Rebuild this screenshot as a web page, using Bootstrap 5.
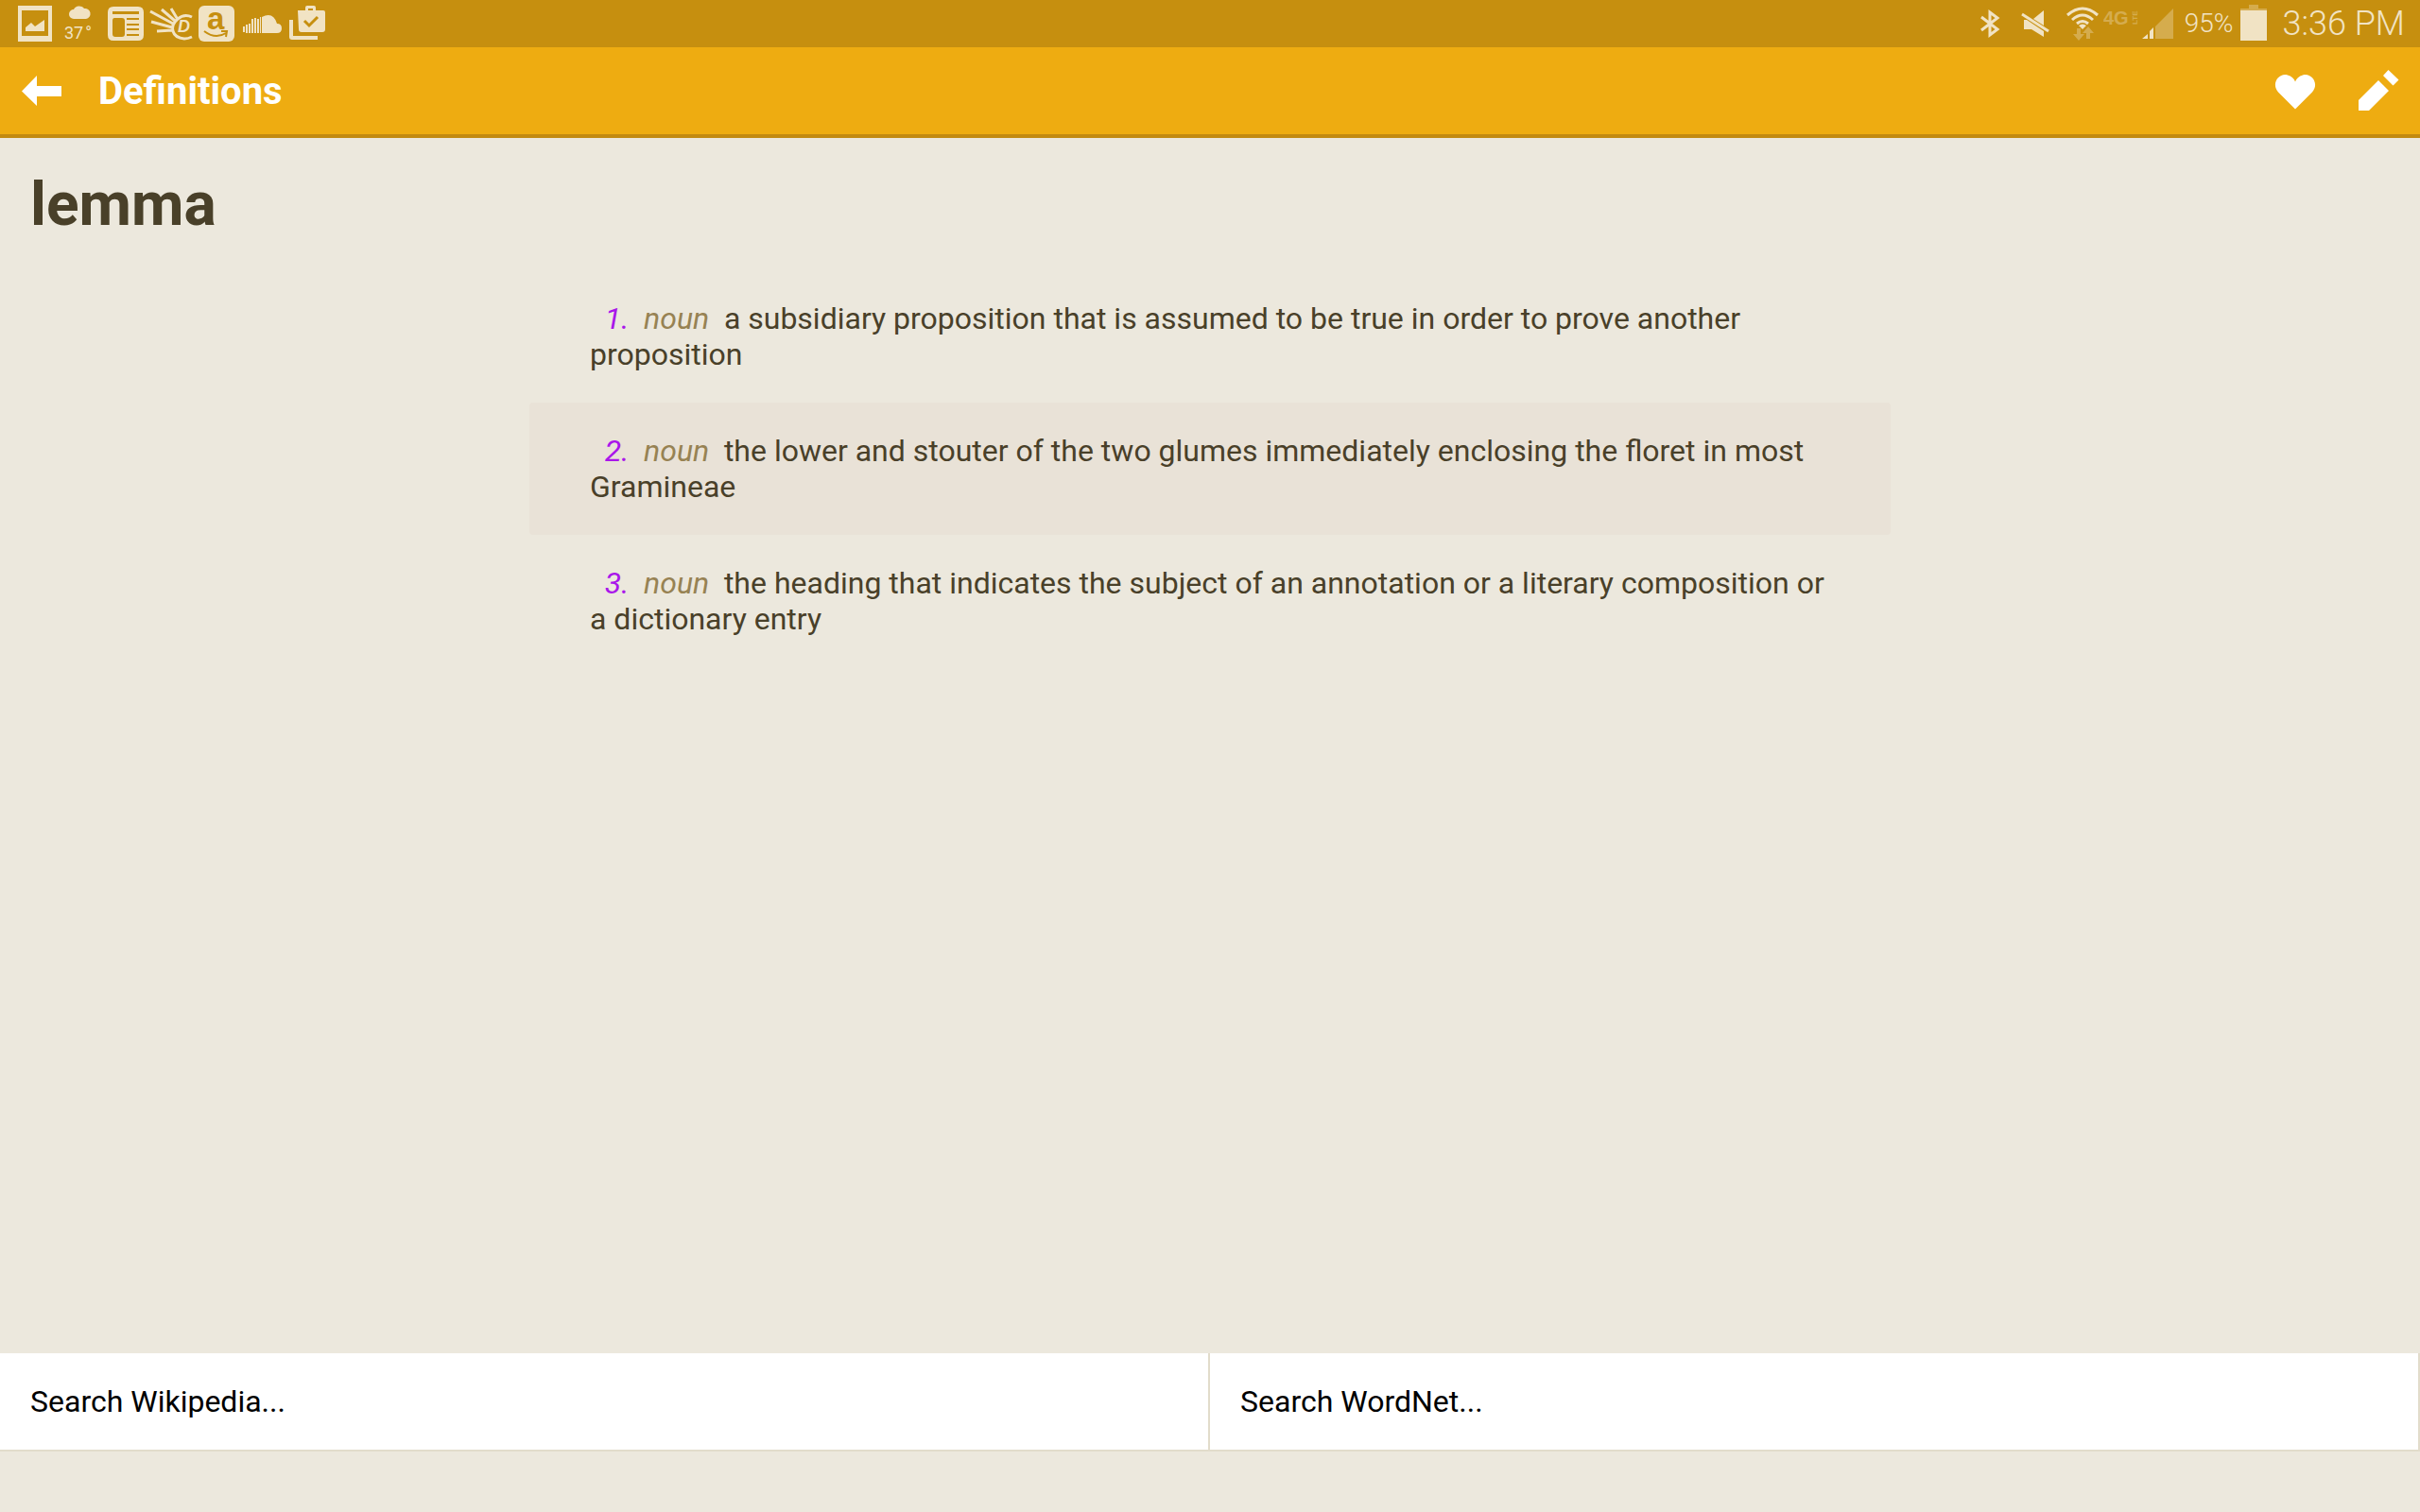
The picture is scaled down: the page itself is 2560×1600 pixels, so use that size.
<!DOCTYPE html>
<html lang="en">
<head>
<meta charset="utf-8">
<meta name="viewport" content="width=device-width, initial-scale=1">
<title>Definitions</title>
<link href="https://cdn.jsdelivr.net/npm/bootstrap@5.3.0/dist/css/bootstrap.min.css" rel="stylesheet">
<style>
  body { font-family: Roboto, "Liberation Sans", sans-serif; font-size: 32px; line-height: 38px; color: #494029; background: #ece8dd; }
  .status-bar { height: 50px; background: #c68f0f; color: #f1e3c4; font-weight: 300; padding-left: 13px; }
  .status-bar svg, .app-bar svg { display: block; flex: none; fill: currentColor; }
  .faint { opacity: .35; }
  .battery-text { font-size: 28px; margin-left: 10px; }
  .clock { font-size: 36px; }
  .app-bar { height: 96px; background: #eeac11; border-bottom: 4px solid #c28a10; padding: 0 4px; }
  .app-bar .btn { --bs-btn-color: #fff; --bs-btn-hover-color: #fff; width: 80px; height: 92px; }
  .app-title { font-size: 40px; line-height: 48px; font-weight: 700; color: #fff; padding: 2px 0 0 20px; }
  .term { font-size: 64px; line-height: 78px; font-weight: 700; padding: 32px 32px 30px; }
  .senses { max-width: 1440px; }
  .sense { padding: 32px 64px; }
  .sense:nth-child(even) { background: #e9e2d7; }
  .sense-no { color: #a916ea; }
  .sense-pos { color: #978253; }
  .search-row { margin-bottom: 64px; }
  .search-link { height: 104px; background: #fff; color: #000; border-right: 2px solid #e2dccb; border-bottom: 2px solid #e2dccb; padding: 32px; }
</style>
</head>
<body class="d-flex flex-column min-vh-100">
<div class="status-bar d-flex align-items-center justify-content-between">
  <div class="d-flex align-items-center">
    <svg width="48" height="50" viewBox="13 0 48 50"><path fill-rule="evenodd" d="M19 6h36v38H19zM23 11v27h28V11z"/><path d="M27 33v-4l6-5 4 4 10-7v12z"/></svg>
    <svg width="48" height="50" viewBox="61 0 48 50"><path d="M78 20a5 5 0 0 1 0-10 6.500 6.500 0 0 1 11-1 5.500 5.500 0 0 1 2 11z"/><text x="68" y="41" font-size="18" font-weight="400">37<tspan dx="2">°</tspan></text></svg>
    <svg width="48" height="50" viewBox="109 0 48 50"><path fill-rule="evenodd" d="M120 7h26q6 0 6 6v24q0 6-6 6h-26q-6 0-6-6V13q0-6 6-6zM119 12v3h28v-3zM121 19q-2 0-2 3v14q0 3 3 3h7q3 0 3-3V22q0-3-3-3zM134 19v2h13v-2zM134 25v2h13v-2zM134 30v2h13v-2zM134 36v2h13v-2z"/></svg>
    <svg width="48" height="50" viewBox="157 0 48 50"><path fill="none" stroke="currentColor" stroke-width="3" d="M159 12l24 13M160 23l22 6M166 33l16-1M171 10l14 12M181 9l6 10M203 18q-8-4-15 2t-5 13 12 8q4 0 8-2"/><text x="188" y="34" font-family="Liberation Sans, sans-serif" font-size="18" font-weight="700" font-style="italic">D</text></svg>
    <svg width="48" height="50" viewBox="205 0 48 50"><rect x="210" y="6" width="38" height="38" rx="6"/><text x="219" y="31" font-family="Liberation Sans, sans-serif" font-size="33" font-weight="700" fill="#c68f0f">a</text><path fill="none" stroke="#c68f0f" stroke-width="2" d="M216 33q12 9 23 2M234 33h6l-1 6"/></svg>
    <svg width="48" height="50" viewBox="253 0 48 50"><path d="M277 35V18q12-6 16 7 5 0 5 5t-5 5zM257 28h2v6h-2zM260 26h2v9h-2zM263 25h2v10h-2zM266 20h2v15h-2zM269 19h2v16h-2zM272 20h2v15h-2zM275 18h1v17h-1z"/></svg>
    <svg width="48" height="50" viewBox="301 0 48 50"><path fill-rule="evenodd" d="M315 11h8V8q0-2 2-2h7q2 0 2 2v3h8q2 0 2 2v18q0 3-3 3h-22q-3 0-3-3zM326 11h5V9h-5z"/><path d="M306 21h4v17h26v4h-27q-3 0-3-3z"/><path fill="none" stroke="#c68f0f" stroke-width="3" d="M322 22l5 5 9-9"/></svg>
  </div>
  <div class="d-flex align-items-center pe-3">
    <svg width="48" height="50" viewBox="2082 0 48 50"><path fill="none" stroke="currentColor" stroke-width="3" d="M2097 18l17 13-8 6V13l8 6-17 13"/></svg>
    <svg width="48" height="50" viewBox="2130 0 48 50"><path d="M2142 21h3l18 12v6l-13-8h-8zM2152 20l11-9v16z"/><path fill="none" stroke="currentColor" stroke-width="3" d="M2140 15l28 18"/></svg>
    <svg width="48" height="50" viewBox="2178 0 48 50"><path fill="none" stroke="currentColor" stroke-width="3" d="M2188 16q16-14 32 0M2193 21q11-10 22 0M2198 25q6-5 12 0"/><path d="M2200 27q4-3 8 0l-4 4z"/><path class="faint" d="M2198 30h4v6h4l-6 7-6-7h4zM2208 41v-6h-4l6-7 6 7h-4v6z"/></svg>
    <svg class="faint" width="40" height="50" viewBox="2226 0 40 50"><text x="2226" y="26" font-family="Liberation Sans, sans-serif" font-size="20" font-weight="700">4G</text><text transform="translate(2262 26) rotate(-90)" font-family="Liberation Sans, sans-serif" font-size="8" font-weight="700">LTE</text></svg>
    <svg width="36" height="50" viewBox="2266 0 36 50"><path d="M2267 41l6-5v5zM2275 33l4-4v12h-4z"/><path class="faint" d="M2281 28l19-19v32h-19z"/></svg>
    <span class="battery-text">95%</span>
    <svg class="mx-2" width="28" height="50" viewBox="2371 0 28 50"><path d="M2371 11h28v32h-28z"/><path class="faint" d="M2380 5h10v4h9v2h-28V9h9z"/></svg>
    <span class="clock ms-2">3:36 PM</span>
  </div>
</div>
<header class="app-bar d-flex align-items-center">
  <button class="btn p-0 border-0 d-flex align-items-center justify-content-center" type="button" aria-label="Back">
    <svg width="44" height="32" viewBox="22 79 44 32"><path d="M23 95.500L39 79v11h26v11H39v10z"/></svg>
  </button>
  <h1 class="app-title mb-0 me-auto">Definitions</h1>
  <button class="btn p-0 border-0 me-2 d-flex align-items-center justify-content-center" type="button" aria-label="Favorite">
    <svg width="44" height="44" viewBox="2406 74 44 44"><path d="M2428 115.500L2410 97.500c-8-9 1-21 10-18 4 1 7 4 8 7 1-3 4-6 8-7 9-3 18 9 10 18z"/></svg>
  </button>
  <button class="btn p-0 border-0 d-flex align-items-center justify-content-center" type="button" aria-label="Edit">
    <svg width="44" height="44" viewBox="2494 74 44 44"><path d="M2495 117v-11l21-21 11 11-21 21zM2521 80l5.500-6 11 10.500-6 6z"/></svg>
  </button>
</header>
<main class="flex-grow-1">
  <h2 class="term mb-0">lemma</h2>
  <ol class="senses list-unstyled mx-auto mb-0">
    <li class="sense rounded-1"><em class="sense-no">&nbsp; 1.&nbsp; </em><em class="sense-pos">noun&nbsp; </em>a subsidiary proposition that is assumed to be true in order to prove another proposition</li>
    <li class="sense rounded-1"><em class="sense-no">&nbsp; 2.&nbsp; </em><em class="sense-pos">noun&nbsp; </em>the lower and stouter of the two glumes immediately enclosing the floret in most Gramineae</li>
    <li class="sense rounded-1"><em class="sense-no">&nbsp; 3.&nbsp; </em><em class="sense-pos">noun&nbsp; </em>the heading that indicates the subject of an annotation or a literary composition or a dictionary entry</li>
  </ol>
</main>
<nav class="search-row row g-0" aria-label="Search elsewhere">
  <div class="col-6"><a class="search-link d-block text-decoration-none" href="#wikipedia">Search Wikipedia...</a></div>
  <div class="col-6"><a class="search-link d-block text-decoration-none" href="#wordnet">Search WordNet...</a></div>
</nav>
<script src="https://cdn.jsdelivr.net/npm/bootstrap@5.3.0/dist/js/bootstrap.bundle.min.js"></script>
</body>
</html>
